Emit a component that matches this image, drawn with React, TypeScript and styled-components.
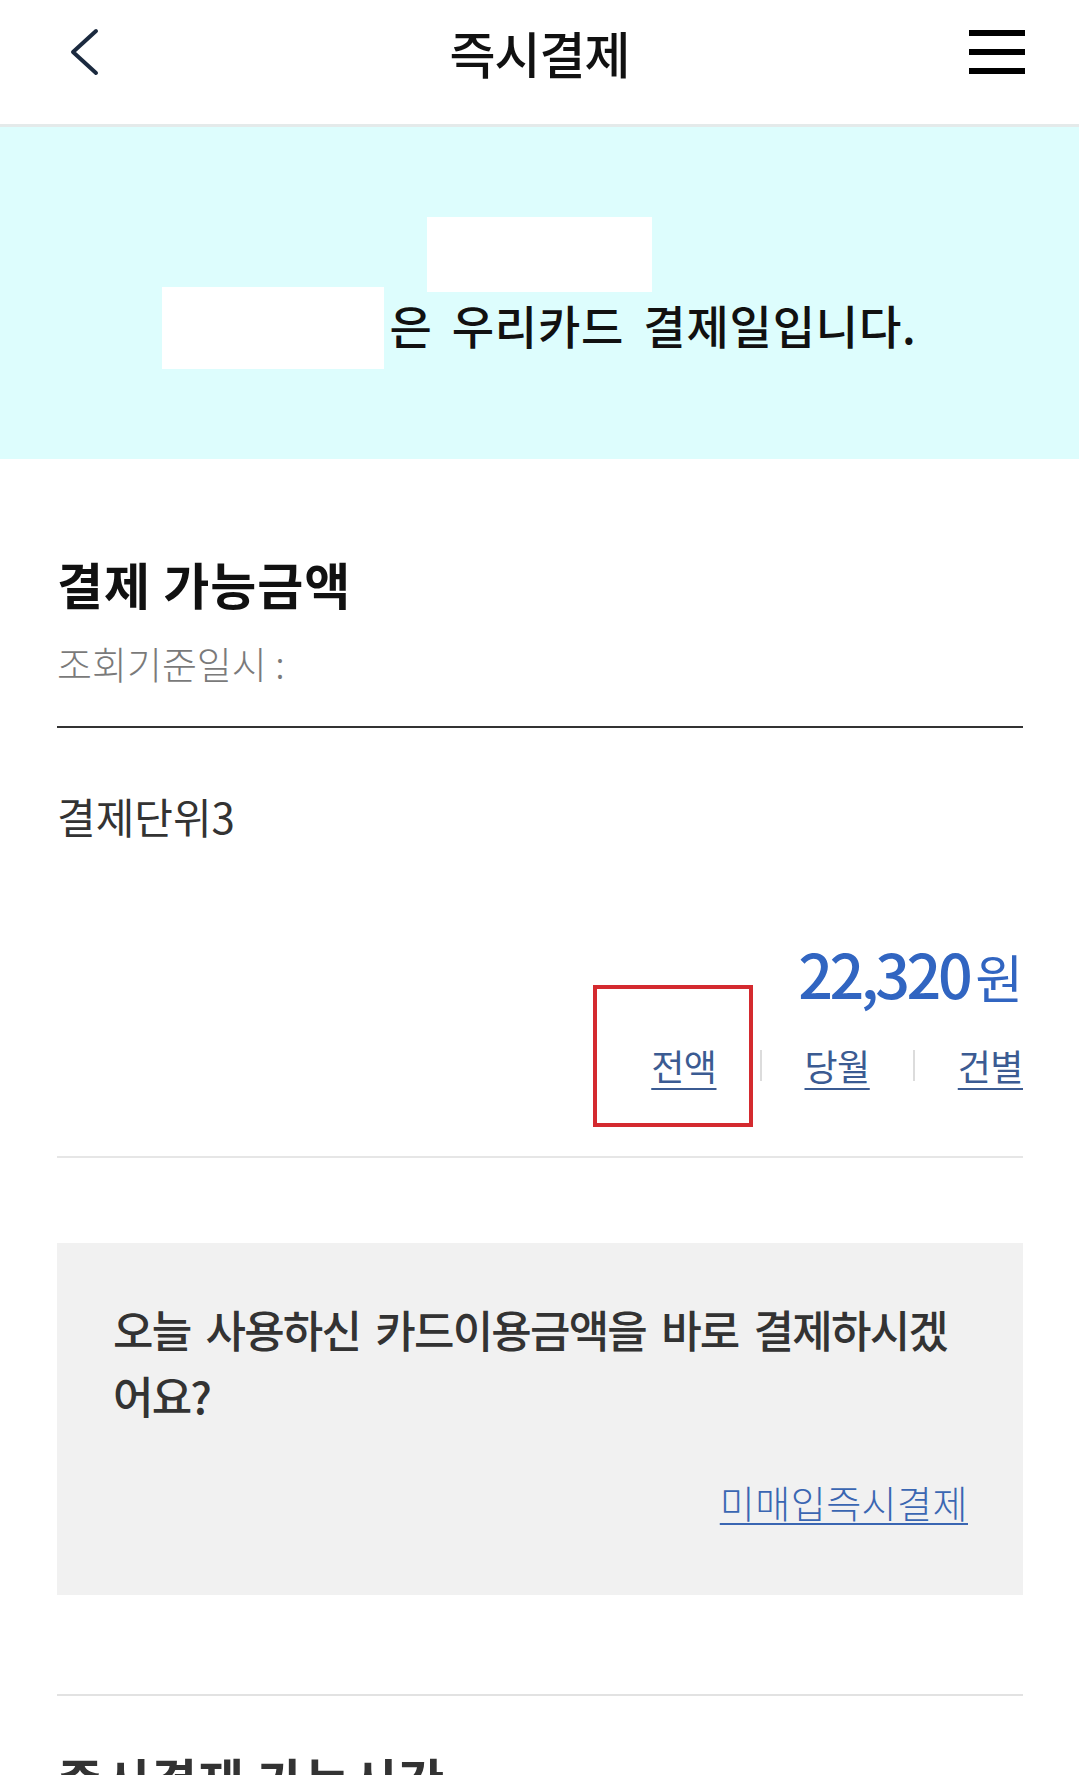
import React from "react";
import styled, { createGlobalStyle } from "styled-components";

const GlobalStyle = createGlobalStyle`
  html, body {
    margin: 0;
    padding: 0;
    background: #ffffff;
  }
  body {
    font-family: "Noto Sans CJK KR", "Noto Sans", sans-serif;
    color: #111111;
  }
  * {
    box-sizing: border-box;
  }
`;

const Page = styled.div`
  width: 1079px;
  background: #ffffff;
`;

const Header = styled.header`
  height: 127px;
  display: grid;
  grid-template-columns: 1fr auto 1fr;
  align-items: center;
  padding: 0 54px 21px 54px;
  border-bottom: 3px solid #e4eaea;
`;

const IconButton = styled.button<{ $align: "start" | "end"; $inset?: number }>`
  justify-self: ${(p) => p.$align};
  margin-left: ${(p) => p.$inset || 0}px;
  display: flex;
  align-items: center;
  justify-content: center;
  padding: 0;
  border: 0;
  background: transparent;
  cursor: pointer;
`;

const Title = styled.h1`
  margin: 0;
  font-size: 50px;
  line-height: 60px;
  font-weight: 500;
  letter-spacing: -1px;
  color: #111111;
`;

const MenuBars = styled.span`
  display: flex;
  flex-direction: column;
  gap: 13px;
`;

const MenuBar = styled.span`
  display: block;
  width: 56px;
  height: 6px;
  background: #000000;
`;

const Banner = styled.section`
  height: 332px;
  background: #ddfdfd;
  display: flex;
  flex-direction: column;
  align-items: center;
  justify-content: center;
`;

const BannerLine = styled.div<{ $pull?: number }>`
  display: flex;
  align-items: center;
  margin-top: ${(p) => -(p.$pull || 0)}px;
`;

const Masked = styled.span<{ $w: number; $h: number }>`
  display: block;
  width: ${(p) => p.$w}px;
  height: ${(p) => p.$h}px;
  background: #ffffff;
`;

const BannerText = styled.span`
  margin: 0 0 8px 5px;
  font-size: 46px;
  line-height: 56px;
  font-weight: 500;
  letter-spacing: 0.8px;
  word-spacing: 8px;
  color: #111111;
`;

const Main = styled.main`
  padding: 0 56px 0 57px;
`;

const SectionTitle = styled.h2<{ $top: number; $color?: string }>`
  margin: ${(p) => p.$top}px 0 0;
  font-size: 50px;
  line-height: 60px;
  font-weight: 700;
  letter-spacing: 1px;
  color: ${(p) => p.$color || "#111111"};
`;

const SubText = styled.p`
  margin: 28px 0 0;
  font-size: 38px;
  line-height: 44px;
  font-weight: 300;
  letter-spacing: 0;
  color: #7a7a7a;
`;

const Rule = styled.hr<{ $top: number; $color: string }>`
  margin: ${(p) => p.$top}px 0 0;
  height: 2px;
  border: 0;
  background: ${(p) => p.$color};
`;

const UnitLabel = styled.h3`
  margin: 63px 0 0;
  font-size: 42px;
  line-height: 50px;
  font-weight: 400;
  letter-spacing: 0;
  color: #333333;
`;

const AmountRow = styled.div`
  margin-top: 97px;
  text-align: right;
  font-size: 61px;
  line-height: 70px;
  color: #3165c1;
`;

const AmountNumber = styled.span`
  font-weight: 500;
  letter-spacing: -3.5px;
`;

const AmountUnit = styled.span`
  margin-left: 6px;
  font-size: 52px;
  line-height: 1;
  font-weight: 400;
`;

const LinkRow = styled.nav`
  margin-top: 35px;
  display: flex;
  justify-content: flex-end;
  align-items: center;
  gap: 43px;
`;

const TextLink = styled.a`
  position: relative;
  display: block;
  font-size: 36px;
  line-height: 44px;
  font-weight: 400;
  letter-spacing: -0.5px;
  color: #3b5b92;
  text-decoration: underline;
  text-decoration-thickness: 2px;
  text-underline-offset: 7px;
`;

const Separator = styled.span`
  display: block;
  width: 2px;
  height: 31px;
  background: #dcdcdc;
`;

const Highlight = styled.span`
  position: absolute;
  left: -58px;
  top: -58px;
  width: 160px;
  height: 142px;
  border: 4px solid #d42a2f;
  pointer-events: none;
`;

const InfoBox = styled.section`
  margin-top: 85px;
  padding: 53px 55px 70px 56px;
  background: #f1f1f1;
`;

const InfoText = styled.p`
  margin: 0;
  font-size: 44px;
  line-height: 66px;
  font-weight: 500;
  letter-spacing: -1.8px;
  word-spacing: 7px;
  color: #333333;
`;

const InfoLinkWrap = styled.div`
  margin-top: 51px;
  display: flex;
  justify-content: flex-end;
`;

const InfoLink = styled.a`
  font-size: 38px;
  line-height: 46px;
  font-weight: 300;
  letter-spacing: 0.5px;
  color: #3a66b2;
  text-decoration: underline;
  text-decoration-thickness: 2px;
  text-underline-offset: 5px;
`;

function BackIcon() {
  return (
    <svg width="30" height="48" viewBox="0 0 30 48" aria-hidden="true">
      <path
        d="M26 3 L3 24 L26 45"
        fill="none"
        stroke="#1b2a3f"
        strokeWidth="4"
        strokeLinecap="round"
        strokeLinejoin="round"
      />
    </svg>
  );
}

export default function App() {
  return (
    <>
      <GlobalStyle />
      <Page>
        <Header>
          <IconButton $align="start" $inset={16} aria-label="뒤로">
            <BackIcon />
          </IconButton>
          <Title>즉시결제</Title>
          <IconButton $align="end" aria-label="메뉴">
            <MenuBars>
              <MenuBar />
              <MenuBar />
              <MenuBar />
            </MenuBars>
          </IconButton>
        </Header>

        <Banner>
          <BannerLine>
            <Masked $w={225} $h={75} />
          </BannerLine>
          <BannerLine $pull={5}>
            <Masked $w={222} $h={82} />
            <BannerText>은 우리카드 결제일입니다.</BannerText>
          </BannerLine>
        </Banner>

        <Main>
          <SectionTitle $top={94}>결제 가능금액</SectionTitle>
          <SubText>조회기준일시 :</SubText>
          <Rule $top={41} $color="#333333" />

          <UnitLabel>결제단위3</UnitLabel>
          <AmountRow>
            <AmountNumber>22,320</AmountNumber>
            <AmountUnit>원</AmountUnit>
          </AmountRow>
          <LinkRow>
            <TextLink href="#">
              전액
              <Highlight />
            </TextLink>
            <Separator />
            <TextLink href="#">당월</TextLink>
            <Separator />
            <TextLink href="#">건별</TextLink>
          </LinkRow>
          <Rule $top={69} $color="#e6e6e6" />

          <InfoBox>
            <InfoText>
              오늘 사용하신 카드이용금액을 바로 결제하시겠
              <br />
              어요?
            </InfoText>
            <InfoLinkWrap>
              <InfoLink href="#">미매입즉시결제</InfoLink>
            </InfoLinkWrap>
          </InfoBox>

          <Rule $top={99} $color="#e2e2e2" />
          <SectionTitle $top={53} $color="#333333">
            즉시결제 가능시간
          </SectionTitle>
        </Main>
      </Page>
    </>
  );
}
